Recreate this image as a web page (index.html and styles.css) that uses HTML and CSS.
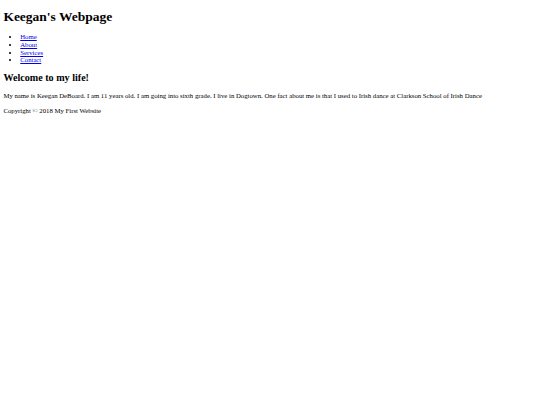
FILE: index.html
```html
<!DOCTYPE html>
<html>
<head>
<meta charset="utf-8">
<title>Keegan's Webpage</title>
<link rel="stylesheet" href="styles.css">
</head>
<body>
<header class="site-header">
<h1 class="title">Keegan's Webpage</h1>
<nav class="nav">
<ul class="nav-list">
<li><a href="#">Home</a></li>
<li><a href="#">About</a></li>
<li><a href="#">Services</a></li>
<li><a href="#">Contact</a></li>
</ul>
</nav>
</header>
<main class="content">
<h2 class="welcome">Welcome to my life!</h2>
<p class="text">My name is Keegan DeBoard. I am 11 years old. I am going into sixth grade. I live in Dogtown. One fact about me is that I used to Irish dance at Clarkson School of Irish Dance</p>
</main>
<footer class="footer">
<p class="text">Copyright © 2018 My First Website</p>
</footer>
</body>
</html>
```
FILE: styles.css
```css
html { font-size: 6.75px; }
body {
  margin: 3.375px;
  font-family: "Liberation Serif", "Times New Roman", serif;
  font-size: 6.75px;
  color: #000;
  background: #fff;
}
.title {
  font-size: 2em;
  font-weight: bold;
  margin: 6px 0 8px;
}
.nav-list {
  margin: 1em 0;
  padding-left: 16.875px;
  list-style: disc;
}
.nav-list li { line-height: 7.67px; }
.nav-list a { color: #0000ee; }
.welcome {
  font-size: 1.5em;
  font-weight: bold;
  margin: 0.83em 0;
}
.text { margin: 1em 0; line-height: 8.25px; }
```
